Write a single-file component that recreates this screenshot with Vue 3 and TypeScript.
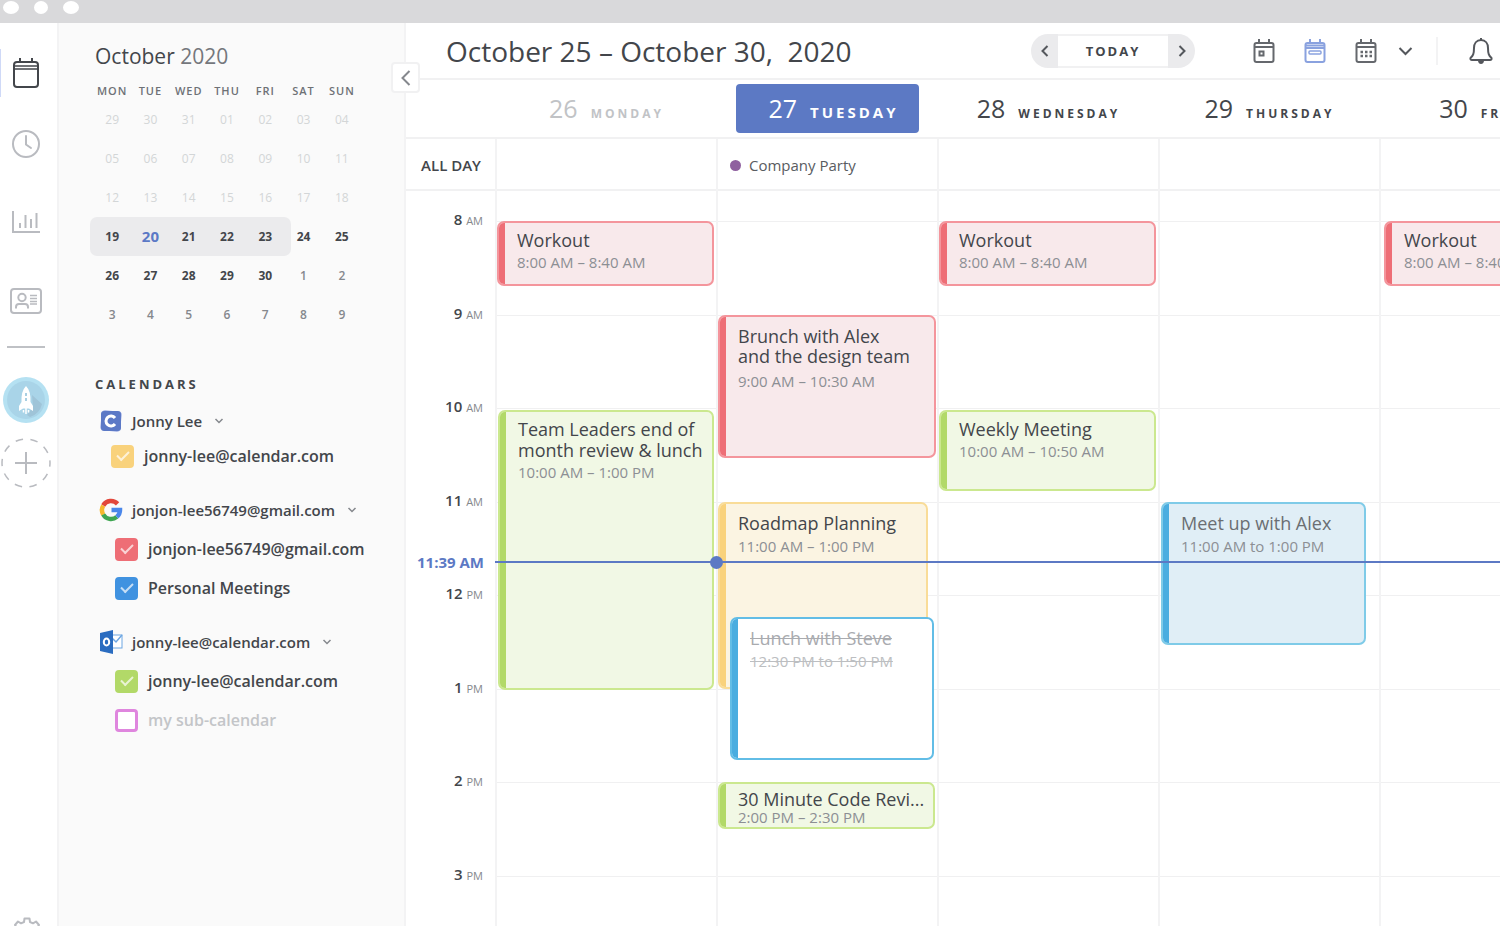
<script setup lang="ts">
import { ref } from 'vue'

type Tone = 'red' | 'green' | 'yellow' | 'blue' | 'outline'
type Fit = 'normal' | 'roomy' | 'tight' | 'compact'

interface CalendarEvent {
  title: string[]
  time: string
  start: number
  end: number
  tone: Tone
  fit: Fit
  left: number
  right: number
}

interface Day {
  date: number
  name: string
  state: 'past' | 'current' | 'future'
  allDay?: string
  events: CalendarEvent[]
}

const at = (hour: number, minute = 0) => hour * 60 + minute
const dayStart = at(8)
const dayLength = 8 * 60
const percent = (minutes: number) => `${(minutes / dayLength) * 100}%`

const workout = (): CalendarEvent => ({
  title: ['Workout'], time: '8:00 AM – 8:40 AM', start: at(8), end: at(8, 42),
  tone: 'red', fit: 'normal', left: 0, right: 2,
})

const days: Day[] = [
  {
    date: 26, name: 'Monday', state: 'past',
    events: [
      workout(),
      { title: ['Team Leaders end of', 'month review & lunch'], time: '10:00 AM – 1:00 PM', start: at(10, 1), end: at(13, 1), tone: 'green', fit: 'normal', left: 1, right: 2 },
    ],
  },
  {
    date: 27, name: 'Tuesday', state: 'current', allDay: 'Company Party',
    events: [
      { title: ['Brunch with Alex', 'and the design team'], time: '9:00 AM – 10:30 AM', start: at(9), end: at(10, 32), tone: 'red', fit: 'tight', left: 0, right: 1 },
      { title: ['Roadmap Planning'], time: '11:00 AM – 1:00 PM', start: at(11), end: at(13), tone: 'yellow', fit: 'roomy', left: 0, right: 9 },
      { title: ['Lunch with Steve'], time: '12:30 PM to 1:50 PM', start: at(12, 14), end: at(13, 46), tone: 'outline', fit: 'roomy', left: 12, right: 3 },
      { title: ['30 Minute Code Revi...'], time: '2:00 PM – 2:30 PM', start: at(14), end: at(14, 30), tone: 'green', fit: 'compact', left: 0, right: 2 },
    ],
  },
  {
    date: 28, name: 'Wednesday', state: 'future',
    events: [
      workout(),
      { title: ['Weekly Meeting'], time: '10:00 AM – 10:50 AM', start: at(10, 1), end: at(10, 53), tone: 'green', fit: 'normal', left: 0, right: 2 },
    ],
  },
  {
    date: 29, name: 'Thursday', state: 'future',
    events: [
      { title: ['Meet up with Alex'], time: '11:00 AM to 1:00 PM', start: at(11), end: at(12, 32), tone: 'blue', fit: 'roomy', left: 1, right: 13 },
    ],
  },
  { date: 30, name: 'Friday', state: 'future', events: [{ ...workout(), left: 3 }] },
]

const hours = [
  { n: 8, half: 'AM' }, { n: 9, half: 'AM' }, { n: 10, half: 'AM' }, { n: 11, half: 'AM' },
  { n: 12, half: 'PM' }, { n: 1, half: 'PM' }, { n: 2, half: 'PM' }, { n: 3, half: 'PM' },
]

const placeEvent = (e: CalendarEvent) => ({
  top: percent(e.start - dayStart),
  height: percent(e.end - e.start),
  left: `${e.left}px`,
  right: `${e.right}px`,
})
const nowStyle = { top: percent(at(11, 39) - dayStart) }

const weekdays = ['MON', 'TUE', 'WED', 'THU', 'FRI', 'SAT', 'SUN']
const weeks = [
  ['29', '30', '31', '01', '02', '03', '04'],
  ['05', '06', '07', '08', '09', '10', '11'],
  ['12', '13', '14', '15', '16', '17', '18'],
  ['19', '20', '21', '22', '23', '24', '25'],
  ['26', '27', '28', '29', '30', '1', '2'],
  ['3', '4', '5', '6', '7', '8', '9'],
]
const dateClass = (week: number, day: number) => {
  if (week < 3) return 'gone'
  if (week === 3 && day === 1) return 'today'
  if (week === 3 || (week === 4 && day < 5)) return 'strong'
  return 'next'
}

const accounts = ref([
  {
    logo: 'calendar', name: 'Jonny Lee',
    items: [{ id: 'c1', label: 'jonny-lee@calendar.com', color: 'amber', on: true }],
  },
  {
    logo: 'google', name: 'jonjon-lee56749@gmail.com',
    items: [
      { id: 'c2', label: 'jonjon-lee56749@gmail.com', color: 'coral', on: true },
      { id: 'c3', label: 'Personal Meetings', color: 'azure', on: true },
    ],
  },
  {
    logo: 'outlook', name: 'jonny-lee@calendar.com',
    items: [
      { id: 'c4', label: 'jonny-lee@calendar.com', color: 'lime', on: true },
      { id: 'c5', label: 'my sub-calendar', color: 'orchid', on: false },
    ],
  },
])
</script>

<template>
  <div class="window">
    <div class="titlebar"><i class="wide"></i><i></i><i class="wide"></i></div>

    <div class="app">
      <nav class="rail" aria-label="Main">
        <button class="nav active" aria-label="Calendar">
          <svg width="28" height="32" viewBox="0 0 28 32" fill="none" stroke="#43464b" stroke-width="2">
            <rect x="2" y="5" width="24" height="25" rx="3" />
            <path d="M2 9H26M2 12H26" stroke-width="1.500" />
            <path d="M8 1V5M20 1V5" />
          </svg>
        </button>
        <button class="nav clock" aria-label="Recent">
          <svg width="30" height="30" viewBox="0 0 30 30" fill="none" stroke="#b9bbc0" stroke-width="2">
            <circle cx="15" cy="15" r="13" />
            <path d="M15 7V15.500L20 19" stroke-linecap="round" />
          </svg>
        </button>
        <button class="nav chart" aria-label="Analytics">
          <svg width="30" height="24" viewBox="0 0 30 24" fill="none" stroke="#b9bbc0" stroke-width="2">
            <path d="M2 1V22H29M9 18V13M14.500 18V5M20 18V9M25.500 18V3" />
          </svg>
        </button>
        <button class="nav card" aria-label="Contacts">
          <svg width="34" height="28" viewBox="0 0 34 28" fill="none" stroke="#b9bbc0" stroke-width="2">
            <rect x="2" y="2" width="30" height="24" rx="3" />
            <circle cx="13" cy="10.500" r="3.700" />
            <path d="M7 21.500V20Q7 17 10 17H16Q19 17 19 20V21.500" />
            <path d="M21 8.500H28M21 11.500H28M21 14.500H28M21 17H28" stroke-width="1.500" />
          </svg>
        </button>
        <hr />
        <button class="team" aria-label="Team space">
          <svg width="46" height="46" viewBox="0 0 46 46">
            <circle cx="23" cy="23" r="23" fill="#b5e1f2" />
            <circle cx="23" cy="23" r="19" fill="#a9d4e8" />
            <path d="M24 38L30 30L29 18L39 27A18 18 0 0 1 27 40Z" fill="#9fc4d8" />
            <path d="M23 9Q28 14 27.500 25L30 29V34L26 31.500H20L16 34V29L18.500 25Q18 14 23 9Z" fill="#fff" />
            <path d="M23 16V25" stroke="#a9cfe2" stroke-width="2" stroke-dasharray="3 2" />
            <path d="M23 31V37M20.500 33V35.500M25.500 33V35.500" stroke="#fff" stroke-width="1.500" />
          </svg>
        </button>
        <button class="add" aria-label="Add space">
          <svg width="50" height="50" viewBox="0 0 50 50" fill="none" stroke="#b9bbc0" stroke-width="2">
            <circle cx="25" cy="25" r="24" stroke-dasharray="7.500 7.580" stroke-dashoffset="3.750" stroke-width="1.500" />
            <path d="M14 25H36M25 14V36" />
          </svg>
        </button>
        <button class="gear" aria-label="Settings">
          <svg width="30" height="30" viewBox="0 0 30 30" fill="none" stroke="#b9bbc0" stroke-width="2">
            <path d="M12 5L12.500 1.500H17.500L18 5L21 6.300L24 4.500L27 8L25 11V13H28.500V18H25L23.500 21L25.500 24L22 27.500L18 25.500L17.500 28.500H12.500L12 25.500L8 27.500L4.500 24L6.500 21L5 18H1.500V13H5V11L3 8L6 4.500L9 6.300Z" stroke-linejoin="round" />
            <circle cx="15" cy="15" r="5" />
          </svg>
        </button>
      </nav>

      <aside class="side">
        <h2 class="month"><b>October</b> 2020</h2>
        <table class="mini">
          <thead>
            <tr><th v-for="d in weekdays" :key="d" scope="col">{{ d }}</th></tr>
          </thead>
          <tbody>
            <tr v-for="(week, w) in weeks" :key="w" :class="{ range: w === 3 }">
              <td v-for="(d, i) in week" :key="i" :class="dateClass(w, i)">{{ d }}</td>
            </tr>
          </tbody>
        </table>

        <h3 class="heading">CALENDARS</h3>
        <section v-for="a in accounts" :key="a.logo" class="group" :class="a.logo">
          <button class="account">
            <svg v-if="a.logo === 'calendar'" class="logo" width="24" height="24" viewBox="0 0 24 24">
              <rect x="2" y="2" width="20" height="20" rx="3" fill="#b3bfea" transform="rotate(8 12 12)" />
              <rect x="2" y="2" width="20" height="20" rx="3" fill="#5c79c6" />
              <path d="M16 9A5 5 0 1 0 16 15" fill="none" stroke="#fff" stroke-width="3" />
            </svg>
            <svg v-else-if="a.logo === 'google'" class="logo" width="24" height="24" viewBox="0 0 24 24" fill="none" stroke-width="4.500">
              <path d="M18.600 5.900A9 9 0 0 0 4.200 7.500" stroke="#e2473b" />
              <path d="M4.200 7.500A9 9 0 0 0 4.200 16.500" stroke="#f5b82e" />
              <path d="M4.200 16.500A9 9 0 0 0 17.800 18.900" stroke="#3fa652" />
              <path d="M17.800 18.900A9 9 0 0 0 21 12H12.500" stroke="#4a87ea" />
            </svg>
            <svg v-else class="logo" width="24" height="24" viewBox="0 0 24 24">
              <rect x="12" y="5" width="11" height="13" fill="#fff" stroke="#6da6e2" />
              <path d="M13 8L17 12L23 5" fill="none" stroke="#6da6e2" stroke-width="1.500" />
              <path d="M1 3L14 0V24L1 21Z" fill="#2a6cc0" />
              <ellipse cx="7.500" cy="12" rx="2.700" ry="3.500" fill="none" stroke="#fff" stroke-width="2" />
            </svg>
            <span>{{ a.name }}</span>
            <svg class="chev" width="10" height="8" viewBox="0 0 10 8" fill="none" stroke="#85888d" stroke-width="1.500">
              <path d="M1.500 2L5 5.500L8.500 2" />
            </svg>
          </button>
          <label v-for="item in a.items" :key="item.id" class="item" :class="{ off: !item.on }" :for="item.id">
            <input :id="item.id" v-model="item.on" type="checkbox" :class="item.color" />
            <span>{{ item.label }}</span>
          </label>
        </section>
      </aside>

      <main class="main">
        <header class="bar">
          <h1>October 25 – October 30,&nbsp; 2020</h1>
          <div class="pill">
            <button aria-label="Previous week">
              <svg width="10" height="14" viewBox="0 0 10 14" fill="none" stroke="#54575c" stroke-width="2"><path d="M7.500 2L2.500 7L7.500 12" /></svg>
            </button>
            <button class="today-btn">TODAY</button>
            <button aria-label="Next week">
              <svg width="10" height="14" viewBox="0 0 10 14" fill="none" stroke="#54575c" stroke-width="2"><path d="M2.500 2L7.500 7L2.500 12" /></svg>
            </button>
          </div>
          <div class="views">
            <button aria-label="Day view">
              <svg width="22" height="26" viewBox="0 0 22 26" fill="none" stroke="#65686d" stroke-width="2">
                <rect x="1.500" y="5" width="19" height="19" rx="2" />
                <path d="M2 9H20M6 1V5M16 1V5" />
                <rect x="6.500" y="13.500" width="4" height="4" />
              </svg>
            </button>
            <button aria-label="Week view">
              <svg width="22" height="26" viewBox="0 0 22 26" fill="none" stroke="#8aa2df" stroke-width="2">
                <rect x="1.500" y="5" width="19" height="19" rx="2" />
                <path d="M2 7.500H20M2 10H20M6 1V5M16 1V5" />
                <rect x="5" y="13" width="12" height="3" rx="1" stroke-width="1.500" />
              </svg>
            </button>
            <button aria-label="Month view">
              <svg width="22" height="26" viewBox="0 0 22 26" fill="none" stroke="#65686d" stroke-width="2">
                <rect x="1.500" y="5" width="19" height="19" rx="2" />
                <path d="M2 9H20M6 1V5M16 1V5" />
                <path d="M5.500 14H17M5.500 18H17" stroke-width="2.500" stroke-dasharray="2.500 2" />
              </svg>
            </button>
          </div>
          <button class="more" aria-label="More views">
            <svg width="15" height="10" viewBox="0 0 15 10" fill="none" stroke="#54575c" stroke-width="2"><path d="M1.500 2L7.500 8L13.500 2" /></svg>
          </button>
          <button class="bell" aria-label="Notifications">
            <svg width="24" height="28" viewBox="0 0 24 28" fill="none" stroke="#54575c" stroke-width="2">
              <path d="M12 3C7.500 3 5 6.500 5 11C5 17 4 18.500 1.500 21Q1 23 3 23H21Q23 23 22.500 21C20 18.500 19 17 19 11C19 6.500 16.500 3 12 3ZM12 1V3" stroke-linejoin="round" />
              <path d="M9 24Q9.500 27 12 27T15 24Z" fill="#54575c" stroke="none" />
            </svg>
          </button>
        </header>

        <div class="week">
          <div class="row names">
            <div></div>
            <div v-for="d in days" :key="d.date" class="name" :class="d.state">
              <div class="chip"><span class="num">{{ d.date }}</span><span class="label">{{ d.name }}</span></div>
            </div>
          </div>
          <div class="row allday">
            <div class="allday-label">ALL DAY</div>
            <div v-for="d in days" :key="d.date" class="col">
              <div v-if="d.allDay" class="party"><i></i>{{ d.allDay }}</div>
            </div>
          </div>
          <div class="row lead">
            <div></div>
            <div v-for="d in days" :key="d.date" class="col"></div>
          </div>
          <div class="row body">
            <div class="hours">
              <div v-for="h in hours" :key="h.n" class="hour"><b>{{ h.n }}</b> <small>{{ h.half }}</small></div>
            </div>
            <div v-for="d in days" :key="d.date" class="col day">
              <div v-for="h in hours" :key="h.n" class="slot"></div>
              <article v-for="(e, i) in d.events" :key="i" class="event" :class="[e.tone, e.fit]" :style="placeEvent(e)">
                <h4><span v-for="line in e.title" :key="line">{{ line }}</span></h4>
                <p>{{ e.time }}</p>
              </article>
            </div>
            <div class="now" :style="nowStyle"><span>11:39 AM</span><i></i></div>
          </div>
        </div>
        <button class="collapse" aria-label="Collapse sidebar">
          <svg width="12" height="18" viewBox="0 0 12 18" fill="none" stroke="#85888d" stroke-width="2"><path d="M9.500 2L2.500 9L9.500 16" /></svg>
        </button>
      </main>
    </div>
  </div>
</template>

<style>
body {
  margin: 0;
}
</style>

<style scoped>
* {
  box-sizing: border-box;
}
.window {
  height: 100vh;
  display: flex;
  flex-direction: column;
  overflow: hidden;
  font-family: "Open Sans", "Noto Sans", sans-serif;
  font-size: 15px;
  color: #43464b;
  background: #fff;
}
h1, h2, h3, h4, p {
  margin: 0;
  font-weight: 400;
}
button {
  display: flex;
  align-items: center;
  justify-content: center;
  padding: 0;
  border: 0;
  background: none;
  font: inherit;
  color: inherit;
  cursor: pointer;
}
svg {
  display: block;
  flex: none;
}
.titlebar {
  flex: none;
  height: 23px;
  display: flex;
  align-items: flex-start;
  gap: 15px;
  padding: 1px 3px;
  background: #d9d9db;
}
.titlebar i {
  width: 14px;
  height: 13px;
  border-radius: 50%;
  background: #fff;
}
.titlebar .wide {
  width: 16px;
}
.app {
  flex: 1;
  min-height: 0;
  display: flex;
}

.rail {
  flex: none;
  width: 59px;
  display: flex;
  flex-direction: column;
  align-items: center;
  padding-top: 26px;
  padding-right: 6px;
  border-right: 2px solid #f3f3f4;
  overflow: hidden;
}
.rail > * {
  flex: none;
}
.nav {
  width: 51px;
  height: 48px;
}
.nav.active {
  border-left: 1px solid #cfd9f7;
}
.nav.clock {
  margin-top: 23px;
}
.nav.chart {
  margin-top: 30px;
}
.nav.card {
  margin-top: 31px;
}
.rail hr {
  width: 38px;
  height: 2px;
  margin: 21px 0 29px;
  border: 0;
  background: #bfc1c5;
}
.add {
  margin-top: 15px;
}
.gear {
  margin: auto 0 -21px 2px;
}

.side {
  flex: none;
  width: 347px;
  padding: 17px 32px 0 33px;
  background: #fafafa;
  border-right: 2px solid #f3f3f4;
}
.month {
  padding-left: 3px;
  font-size: 21px;
  line-height: 32px;
  color: #74777c;
}
.month b {
  font-weight: 500;
  color: #43464b;
}
.mini {
  width: 268px;
  margin-top: 10px;
  margin-left: 1px;
  border-collapse: collapse;
  table-layout: fixed;
  text-align: center;
  font-size: 12px;
}
.mini th {
  height: 18px;
  padding: 0;
  font-size: 11px;
  font-weight: 600;
  letter-spacing: 1px;
  line-height: 18px;
  color: #6e7176;
}
.mini td {
  height: 39px;
  padding: 0;
  line-height: 39px;
}
.mini .gone {
  color: #d3d6d7;
}
.mini .next {
  font-weight: 600;
  color: #85888d;
}
.mini .strong {
  font-weight: 700;
}
.mini .today {
  font-size: 15px;
  font-weight: 700;
  color: #5c79c6;
}
.mini .range {
  position: relative;
  z-index: 0;
}
.mini .range td:first-child::before {
  content: "";
  position: absolute;
  z-index: -1;
  top: 0;
  bottom: 0;
  left: -3px;
  width: 75%;
  border-radius: 7px;
  background: #ebebed;
}
.heading {
  margin: 40px 0 15px;
  padding-left: 3px;
  font-size: 13px;
  font-weight: 700;
  letter-spacing: 3px;
  line-height: 20px;
}
.group {
  display: flex;
  flex-direction: column;
  align-items: flex-start;
  gap: 15px;
  margin-bottom: 30px;
  padding-left: 7px;
}
.group.calendar {
  gap: 11px;
}
.account {
  height: 24px;
  font-weight: 600;
  white-space: nowrap;
}
.account span {
  margin: 0 12px 0 9px;
}
.item {
  height: 24px;
  display: flex;
  align-items: center;
  gap: 10px;
  padding-left: 16px;
  font-size: 16px;
  font-weight: 600;
  white-space: nowrap;
}
.calendar .item {
  padding-left: 12px;
}
.item.off {
  color: #c3c5c8;
}
.item input {
  appearance: none;
  display: flex;
  align-items: center;
  justify-content: center;
  width: 23px;
  height: 23px;
  margin: 0;
  border: 3px solid currentColor;
  border-radius: 4px;
}
.item input:checked {
  background: currentColor;
}
.item input:checked::after {
  content: "";
  width: 10px;
  height: 5px;
  margin-bottom: 3px;
  border: solid #fff;
  border-width: 0 0 2px 2px;
  opacity: 0.7;
  transform: rotate(-45deg);
}
.amber { color: #f9d27c; }
.coral { color: #ee6e76; }
.azure { color: #4092e0; }
.lime { color: #b2d968; }
.orchid { color: #df86de; background: #fff; }

.main {
  position: relative;
  flex: 1;
  min-width: 0;
}
.bar {
  height: 57px;
  display: flex;
  align-items: center;
  padding: 0 7px 0 40px;
  border-bottom: 2px solid #f1f1f2;
}
.bar h1 {
  margin-right: auto;
  font-size: 28px;
  line-height: 38px;
  white-space: nowrap;
}
.pill {
  display: flex;
  height: 34px;
  border-radius: 17px;
  overflow: hidden;
  background: #ebebed;
}
.pill button {
  width: 27px;
}
.pill .today-btn {
  width: 110px;
  border: solid #f1f1f2;
  border-width: 2px 0;
  background: #fff;
  font-size: 13px;
  font-weight: 700;
  letter-spacing: 2px;
}
.views {
  display: flex;
  gap: 29px;
  margin-left: 58px;
}
.more {
  margin-left: 21px;
}
.bell {
  margin-left: 23px;
  padding-left: 31px;
  border-left: 2px solid #f3f3f4;
}
.week {
  overflow: hidden;
}
.row {
  position: relative;
  display: grid;
  grid-template-columns: 89px repeat(5, minmax(221px, 1fr));
}
.names {
  height: 59px;
  border-bottom: 2px solid #f1f1f2;
}
.name {
  padding: 4px 18px 4px 20px;
}
.chip {
  height: 49px;
  display: flex;
  align-items: baseline;
  justify-content: center;
  gap: 13px;
  border-radius: 4px;
  line-height: 49px;
}
.num {
  font-size: 25px;
}
.label {
  font-size: 12px;
  font-weight: 700;
  letter-spacing: 3px;
  text-transform: uppercase;
}
.past {
  color: #c1c3c6;
}
.current .chip {
  padding-left: 12px;
  background: #5c79c4;
  color: #fff;
}
.current .label {
  font-size: 15px;
}
.allday {
  height: 52px;
  border-bottom: 2px solid #f1f1f2;
}
.allday-label {
  padding-right: 14px;
  text-align: right;
  font-weight: 600;
  line-height: 52px;
}
.col {
  position: relative;
  border-left: 2px solid #f3f3f4;
}
.party {
  display: flex;
  align-items: center;
  gap: 8px;
  padding-left: 12px;
  line-height: 52px;
  color: #595c61;
}
.party i {
  width: 11px;
  height: 11px;
  border-radius: 50%;
  background: #8f609f;
}
.lead {
  height: 30px;
}
.body {
  height: 748px;
}
.hours, .day {
  display: grid;
  grid-template-rows: repeat(8, 1fr);
}
.hour {
  margin-top: -14px;
  padding-right: 12px;
  text-align: right;
  line-height: 24px;
}
.hour b {
  font-weight: 600;
}
.hour small {
  font-size: 11px;
  color: #85888d;
}
.slot {
  border-top: 1px solid #f0f0f1;
}
.event {
  position: absolute;
  padding: 7px 0 0 18px;
  border: 2px solid var(--edge);
  border-radius: 7px;
  background: var(--fill);
  overflow: hidden;
  white-space: nowrap;
}
.event::before {
  content: "";
  position: absolute;
  inset: -2px auto -2px -2px;
  width: 8px;
  background: var(--bar);
}
.event h4 {
  font-size: 18px;
  line-height: 21px;
}
.event h4 span {
  display: block;
}
.event p {
  font-size: 15px;
  line-height: 22px;
  color: #8c8f94;
}
.event.roomy {
  padding-top: 9px;
}
.event.roomy p {
  line-height: 24px;
}
.event.tight {
  padding-top: 9px;
}
.event.tight h4 {
  line-height: 20px;
}
.event.tight p {
  line-height: 30px;
}
.event.compact {
  padding-top: 5px;
}
.event.compact h4 {
  line-height: 20px;
}
.event.compact p {
  line-height: 16px;
}
.red { --edge: #f4959c; --bar: #ee6e76; --fill: #f8e9eb; }
.green { --edge: #cbe88f; --bar: #b2d968; --fill: #f1f8e5; }
.yellow { --edge: #f9dc98; --bar: #f9d27c; --fill: #fbf4e2; }
.blue { --edge: #7fcbe8; --bar: #4aade0; --fill: #e0eef6; }
.outline { --edge: #62bde6; --bar: #4aade0; --fill: #fff; }
.blue h4 {
  color: #6b6e73;
}
.outline h4, .outline p {
  color: #a9abaf;
  text-decoration: line-through;
}
.outline p {
  color: #bcbec1;
}
.now {
  position: absolute;
  left: 0;
  right: 0;
  height: 2px;
  margin-top: -1px;
  padding-left: 89px;
  background: #5c79c4 content-box;
}
.now span {
  position: absolute;
  top: -11px;
  left: 0;
  width: 78px;
  text-align: right;
  font-weight: 700;
  line-height: 24px;
  color: #5c79c4;
}
.now i {
  position: absolute;
  top: -5px;
  left: 304px;
  width: 13px;
  height: 13px;
  border-radius: 50%;
  background: #5c79c4;
}
.collapse {
  position: absolute;
  top: 39px;
  left: -15px;
  width: 29px;
  height: 31px;
  border: 2px solid #f1f1f2;
  border-radius: 4px;
  background: #fff;
}
</style>
